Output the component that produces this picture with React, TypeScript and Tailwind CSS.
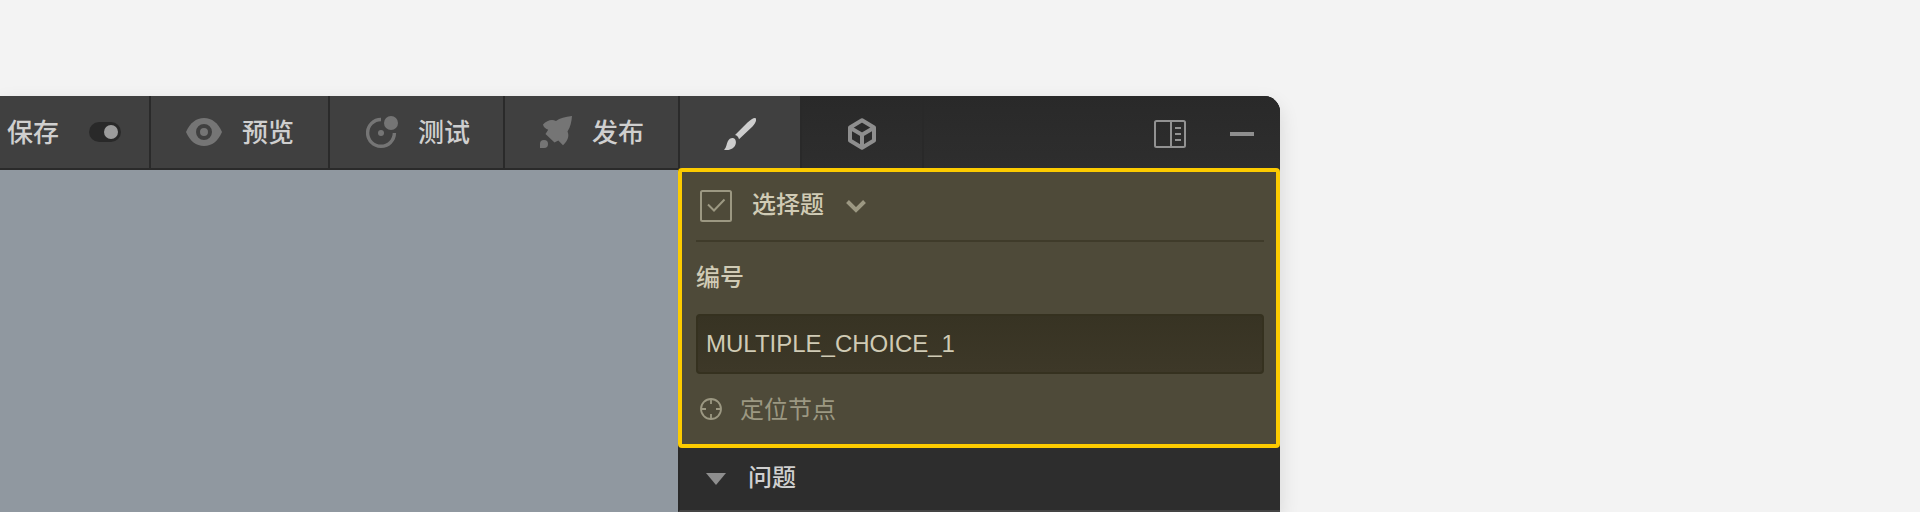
import type { ReactNode } from "react";

function ToolButton({ label, className, children }: { label: string; className: string; children: ReactNode }) {
  return (
    <button
      type="button"
      className={`flex h-full shrink-0 items-center gap-5 border-[#2a2a2a] text-[26px] leading-9 font-medium text-[#cfcfcf] ${className}`}
    >
      {children}
      <span className="pt-0.5">{label}</span>
    </button>
  );
}

function EyeIcon() {
  return (
    <svg width="36" height="28" viewBox="0 0 36 28" fill="none" aria-hidden="true">
      <path d="M0 14C4 5 10 0 18 0s14 5 18 14c-4 9-10 14-18 14S4 23 0 14Z" fill="#757575" />
      <circle cx="18" cy="14" r="6" stroke="#404040" strokeWidth="4" />
    </svg>
  );
}

function OrbitIcon() {
  return (
    <svg width="32" height="32" viewBox="0 0 32 32" fill="none" aria-hidden="true">
      <path d="M15 3.5A13.4 13.4 0 1 0 28.4 17" stroke="#757575" strokeWidth="3.4" />
      <circle cx="25" cy="7" r="7" fill="#757575" />
      <circle cx="15" cy="17" r="3" fill="#757575" />
    </svg>
  );
}

function RocketIcon() {
  return (
    <svg width="32" height="32" viewBox="0 0 32 32" fill="#757575" aria-hidden="true">
      <path d="M32 0C25 .8 20 2 16 5C11.500 3 7 4.500 3 8.500C3.500 11 5 12.500 8.200 13.800L5.500 18L14.500 26.500L18.300 24.500L23 29.300C28 24.500 29.500 20 27.500 15.500C30.500 11 31.500 6 32 0Z" />
      <path d="M0 32v-4a4 4 0 1 1 4 4Z" />
    </svg>
  );
}

function BrushIcon() {
  return (
    <svg width="32" height="32" viewBox="0 0 32 32" fill="#cdcdcd" aria-hidden="true">
      <path d="M31.600.3C33 1.700 31.500 5 28.500 8.500L15 21.200C14.500 19 13.200 17.600 11 17L23.500 4.600C27 1.500 30.200-.6 31.600.3Z" />
      <path d="M0 31.800C2.500 29.500 2.500 26 3.700 23.500C5.500 19.800 9.500 19 11.200 21.600C13.400 25.500 10.500 31.300 4.500 31.900C3 32 1.500 32 0 31.800Z" />
    </svg>
  );
}

function CubeIcon() {
  return (
    <svg width="28" height="32" viewBox="0 0 28 32" fill="none" stroke="#8e8e8e" strokeWidth="4" strokeLinejoin="round" aria-hidden="true">
      <path d="M14 2.300L26 9.500V22.500L14 29.700L2 22.500V9.500ZM2.500 10L14 16.700L25.500 10M14 17V29" />
    </svg>
  );
}

function LayoutIcon() {
  return (
    <svg width="32" height="28" viewBox="0 0 32 28" fill="none" stroke="#929292" strokeWidth="2" aria-hidden="true">
      <rect x="1" y="1" width="30" height="26" rx="1.500" />
      <path d="M17 1v26M21 8h6M21 14h6M21 20h6" />
    </svg>
  );
}

function TargetIcon() {
  return (
    <svg width="22" height="22" viewBox="0 0 22 22" fill="none" stroke="#9c9882" strokeWidth="1.800" aria-hidden="true">
      <circle cx="11" cy="11" r="10" />
      <path d="M11 1v5M11 16v5M1 11h5M16 11h5" />
    </svg>
  );
}

export default function App() {
  return (
    <div className="min-h-screen overflow-hidden bg-[#f3f3f3] pt-24 font-['Liberation_Sans','Noto_Sans_CJK_SC',sans-serif]">
      <div className="flex min-h-[416px] w-2/3 rounded-tr-[16px] bg-[#2d2d2d] shadow-[0_8px_20px_rgba(0,0,0,0.12)]">
        <main className="flex min-w-0 flex-1 flex-col bg-[#9098a0]">
          <header className="flex h-[74px] border-b-2 border-[#2a2a2a] bg-[#404040]">
            <label className="flex min-w-0 flex-1 items-center gap-[30px] border-r-2 border-[#2a2a2a] pl-[7px] text-[26px] leading-9 font-medium text-[#cfcfcf]">
              <span className="shrink-0 pt-0.5">保存</span>
              <input
                type="checkbox"
                role="switch"
                defaultChecked
                className="h-5 w-8 shrink-0 appearance-none rounded-full bg-[#292929] before:mt-[3px] before:mr-[3px] before:ml-auto before:block before:size-[14px] before:rounded-full before:bg-[#9c9c9c]"
              />
            </label>
            <ToolButton label="预览" className="w-[179px] border-r-2 pl-[35px]"><EyeIcon /></ToolButton>
            <ToolButton label="测试" className="w-[175px] border-r-2 pl-9"><OrbitIcon /></ToolButton>
            <ToolButton label="发布" className="w-[173px] pl-[35px]"><RocketIcon /></ToolButton>
          </header>
        </main>

        <aside className="flex w-[602px] shrink-0 flex-col rounded-tr-[16px] bg-[#2d2d2d]">
          <nav className="flex h-[72px] shrink-0 items-center rounded-tr-[16px] border-l-2 border-[#2a2a2a] bg-linear-to-b from-[#292929] to-[#2e2e2e]">
            <button type="button" aria-label="样式" className="flex h-full w-[120px] items-center justify-center bg-[#404040] pt-1">
              <BrushIcon />
            </button>
            <button type="button" aria-label="组件" className="flex h-full w-[124px] items-center justify-center border-x-2 border-[#292929] pt-1">
              <CubeIcon />
            </button>
            <div className="ml-auto flex items-center gap-11 pt-1 pr-[26px]">
              <button type="button" aria-label="布局"><LayoutIcon /></button>
              <button type="button" aria-label="最小化" className="h-1 w-6 bg-[#8e8e8e]" />
            </div>
          </nav>

          <section className="h-[280px] shrink-0 rounded-[4px] border-4 border-[#fccb00] bg-[#4e4a39] pr-3 pl-[14px] text-2xl font-medium text-[#d0cbb5]">
            <button type="button" className="flex h-[70px] w-full items-center border-b-2 border-[#3f3b2a] pl-1">
              <svg width="32" height="32" viewBox="0 0 32 32" fill="none" stroke="#9c9882" strokeWidth="2" aria-hidden="true">
                <rect x="1" y="1" width="30" height="30" rx="1.500" />
                <path d="M8 14.500L14 20.500L24.500 9.500" />
              </svg>
              <span className="ml-5 pb-0.5">选择题</span>
              <svg className="ml-[22px]" width="20" height="13" viewBox="0 0 20 13" fill="none" stroke="#9c9882" strokeWidth="4" aria-hidden="true">
                <path d="M1.500 1.500L10 10L18.500 1.500" />
              </svg>
            </button>
            <label htmlFor="node-id" className="flex h-[72px] items-center">编号</label>
            <input
              id="node-id"
              defaultValue="MULTIPLE_CHOICE_1"
              className="block h-[60px] w-full rounded-[4px] border-2 border-[#35311f] bg-linear-to-b from-[#373323] to-[#3d3828] px-2 text-2xl font-light text-[#d0cbb5] outline-none"
            />
            <button type="button" className="flex h-[70px] items-center gap-[18px] pl-1 font-normal text-[#9c9882]">
              <TargetIcon />
              <span className="pt-0.5">定位节点</span>
            </button>
          </section>

          <button type="button" className="flex h-[64px] shrink-0 items-center gap-[22px] border-b-2 border-l-2 border-b-[#444444] border-l-[#292929] pl-[26px] text-2xl font-medium text-[#d0d0d0]">
            <svg width="20" height="12" viewBox="0 0 20 12" fill="#8e8e8e" aria-hidden="true">
              <path d="M0 0h20L10 12Z" />
            </svg>
            <span className="pb-0.5">问题</span>
          </button>
        </aside>
      </div>
    </div>
  );
}
